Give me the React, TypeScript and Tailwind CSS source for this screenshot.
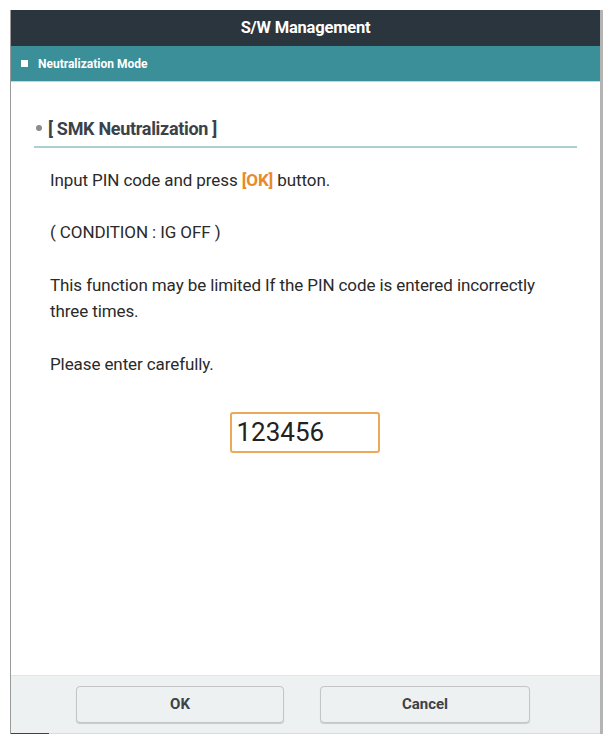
export default function App() {
  return (
    <div className="w-[612px] h-[744px] bg-white pl-[10px] pt-[10px] font-['Roboto',sans-serif]">
      <div className="flex flex-col w-[593px] h-[724px] border-l border-l-[#9a9a9a] border-r-[3px] border-r-[#b4b4b4] bg-white">
        {/* title bar */}
        <div className="flex items-center justify-center h-9 bg-[#2b353e] text-white text-[16.5px] font-bold tracking-[-0.2px]">
          S/W Management
        </div>
        <div className="flex items-center gap-[10px] h-9 pl-[10px] bg-[#3a8f99] text-white text-[12px] font-bold border-b border-b-[#b8dde0]">
          <span className="w-[7px] h-[7px] bg-white" />
          <span>Neutralization Mode</span>
        </div>

        <div className="flex-1 pl-[23px] pr-[23px] pt-[34px]">
          <div className="flex items-center gap-[6px] pl-[2px] h-6">
            <span className="w-[6px] h-[6px] rounded-full bg-[#8c8c8c]" />
            <span className="text-[18px] font-bold text-[#3c4248] tracking-[-0.3px]">[ SMK Neutralization ]</span>
          </div>
          <div className="mt-[6px] h-[2px] bg-[#abcfd4]" />

          <div className="pl-[16px] pt-[19px] text-[17px] text-[#2a2a2a] tracking-[-0.1px] leading-[26px]">
            <p>
              Input PIN code and press <span className="font-bold text-[#e8892a]">[OK]</span> button.
            </p>
            <p className="mt-[26px]">( CONDITION : IG OFF )</p>
            <p className="mt-[27px]">
              This function may be limited If the PIN code is entered incorrectly
              <br />
              three times.
            </p>
            <p className="mt-[27px]">Please enter carefully.</p>
          </div>

          <div className="flex justify-center mt-[35px] pr-[2px]">
            <div className="w-[150px] h-[41px] border-2 border-[#eda858] rounded-[3px] flex items-center pl-[5px] text-[26px] text-[#222]">
              123456
            </div>
          </div>
        </div>

        {/* footer */}
        <div className="flex items-center gap-[36px] h-[58px] pl-[65px] bg-[#eef1f1] border-t border-t-[#e2e5e5]">
          <button className="w-[208px] h-[37px] rounded-[4px] border border-[#c4c6c6] bg-[#eef1f1] shadow-[0_1px_1px_rgba(0,0,0,0.15)] text-[15px] font-bold text-[#3c4248]">
            OK
          </button>
          <button className="w-[210px] h-[37px] rounded-[4px] border border-[#c4c6c6] bg-[#eef1f1] shadow-[0_1px_1px_rgba(0,0,0,0.15)] text-[15px] font-bold text-[#3c4248]">
            Cancel
          </button>
        </div>
        <div className="flex h-[1px]">
          <div className="w-[38px] bg-[#2a3aa8]" />
          <div className="flex-1 bg-[#e8dcb0]" />
        </div>
      </div>
    </div>
  )
}
